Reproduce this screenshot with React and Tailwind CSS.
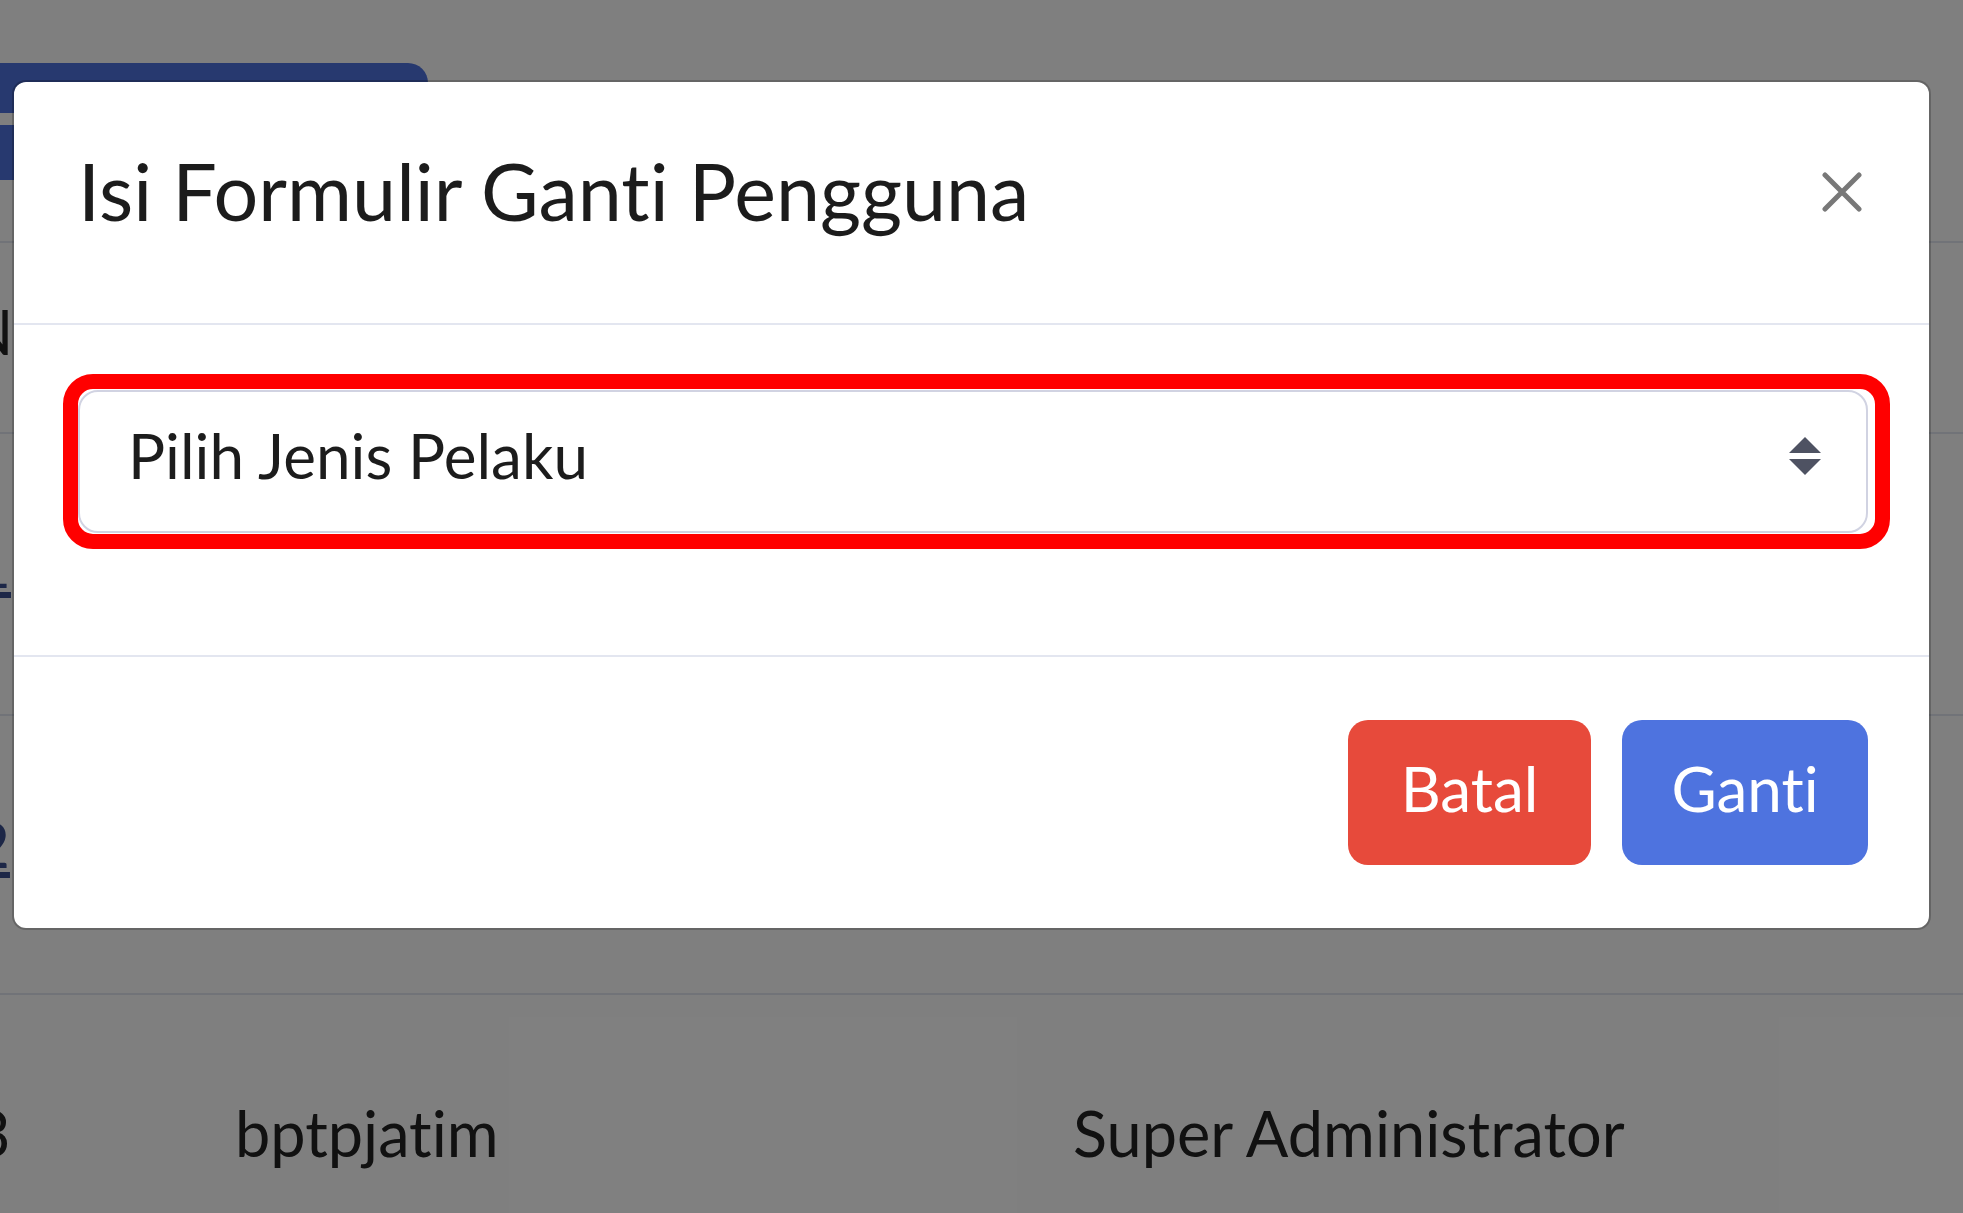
import React from "react";

const font = { fontFamily: "Lato, 'Noto Sans', sans-serif" };

function CloseIcon() {
  return (
    <svg width="40" height="40" viewBox="0 0 40 40" fill="none" stroke="#787878" strokeWidth="5" strokeLinecap="round">
      <path d="M3 3L37 37M37 3L3 37" />
    </svg>
  );
}

function SortIcon() {
  return (
    <svg width="32" height="38" viewBox="0 0 32 38" fill="#4e5262">
      <path d="M16 0L32 16H0Z" />
      <path d="M0 22H32L16 38Z" />
    </svg>
  );
}

function BackgroundPage() {
  return (
    <div className="w-full h-full bg-white text-[62px] leading-[1.5] text-[#222]">
      <div className="pt-[63px]">
        <div className="w-[428px] h-[50px] bg-[#4e73df] rounded-tr-[20px]" />
        <div className="w-[428px] h-[55px] mt-[12px] bg-[#4e73df]" />
      </div>

      {/* table */}
      <div className="mt-[61px] border-t-2 border-[#e3e6f0]">
        <div className="h-[191px] border-b-2 border-[#e3e6f0] pt-[42px] flex">
          <span className="-ml-[34px]">N</span>
        </div>
        <div className="h-[282px] border-b-2 border-[#e3e6f0] pt-[84px] flex">
          <span className="-ml-[25px] underline text-[#3a4f8f]">1</span>
        </div>
        <div className="h-[279px] border-b-2 border-[#e3e6f0] pt-[82px] flex">
          <span className="-ml-[26px] underline text-[#3a4f8f]">2</span>
        </div>
        <div className="pt-[91px] flex text-[63px]">
          <span className="-ml-[26px] w-[36px]">3</span>
          <span className="ml-[225px] w-[838px]">bptpjatim</span>
          <span>Super Administrator</span>
        </div>
      </div>
    </div>
  );
}

export default function App() {
  return (
    <div className="relative w-[1963px] h-[1213px] overflow-hidden [font-variant-ligatures:none]" style={font}>
      <BackgroundPage />
      <div className="absolute inset-0 bg-black/50" />

      {/* Modal */}
      <div className="absolute left-[12px] top-[80px] w-[1919px] bg-white border-2 border-black/20 rounded-[14px] bg-clip-padding">
        <div className="h-[243px] flex items-start pt-[50px] pl-[64px] pr-[67px] border-b-2 border-[#e3e6f0]">
          <h5 className="text-[79px] leading-[1.5] text-[#1c1c1c]">Isi Formulir Ganti Pengguna</h5>
          <button className="ml-auto mt-[40px]">
            <CloseIcon />
          </button>
        </div>

        <div className="pt-[65px] pb-[122px] pl-[64px] pr-[61px]">
          <div className="relative">
            <div className="h-[143px] border-2 border-[#d1d3e2] rounded-[20px] pl-[48px] pr-[45px] pb-[12px] flex items-center justify-between text-[62px] text-[#1c1c1c]">
              <span>Pilih Jenis Pelaku</span>
              <SortIcon />
            </div>
            <div className="absolute -left-[15px] -top-[16px] -right-[22px] -bottom-[16px] border-[15px] border-[#ff0000] rounded-[30px]" />
          </div>
        </div>

        <div className="flex justify-end gap-[31px] pt-[63px] pb-[63px] pr-[61px] border-t-2 border-[#e3e6f0]">
          <button className="w-[243px] h-[145px] pb-[8px] rounded-[20px] bg-[#e74a3b] text-white text-[62px]">Batal</button>
          <button className="w-[246px] h-[145px] pb-[8px] rounded-[20px] bg-[#4e73df] text-white text-[62px]">Ganti</button>
        </div>
      </div>
    </div>
  );
}
